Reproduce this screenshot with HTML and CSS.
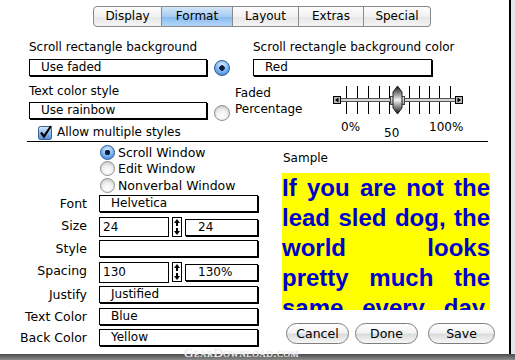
FILE: index.html
```html
<!DOCTYPE html>
<html lang="en">
  <head>
    <meta charset="UTF-8" />
    <meta name="viewport" content="width=device-width, initial-scale=1.0" />
    <title>Format</title>
    <link rel="stylesheet" href="styles.css">
  </head>
  <body>
    <div class="window">
      <div class="tabs">
        <span class="tab">Display</span>
        <span class="tab selected">Format</span>
        <span class="tab">Layout</span>
        <span class="tab">Extras</span>
        <span class="tab">Special</span>
      </div>

      <div class="top">
        <div class="labels-row">
          <span class="label bg-label">Scroll rectangle background</span>
          <span class="label">Scroll rectangle background color</span>
        </div>
        <div class="fields-row">
          <div class="field main">Use faded</div>
          <span class="radio on"></span>
          <div class="field color">Red</div>
        </div>
        <div class="style-row">
          <div class="style-col">
            <span class="label">Text color style</span>
            <div class="field main">Use rainbow</div>
            <div class="check">
              <svg class="checkbox" width="15" height="15" viewBox="0 0 15 15">
                <defs>
                  <linearGradient id="cb" x1="0" y1="0" x2="0" y2="1">
                    <stop offset="0" stop-color="#d8e9fb" />
                    <stop offset="0.5" stop-color="#8dbdf0" />
                    <stop offset="1" stop-color="#4f8fdc" />
                  </linearGradient>
                </defs>
                <rect x="0.5" y="1.5" width="13" height="13" rx="2" fill="url(#cb)" stroke="#3d5f8c" />
                <path d="M3 7.5 L6 11.5 L13 1" fill="none" stroke="#000" stroke-width="2.2" />
              </svg>
              Allow multiple styles
            </div>
          </div>
          <span class="radio off fade-radio"></span>
          <span class="faded">Faded<br>Percentage</span>
          <div class="slider">
            <svg width="132" height="31" viewBox="0 0 132 31">
              <defs>
                <linearGradient id="knob" x1="0" y1="0" x2="0" y2="1">
                  <stop offset="0" stop-color="#111" />
                  <stop offset="0.5" stop-color="#f4f4f4" />
                  <stop offset="1" stop-color="#111" />
                </linearGradient>
                <linearGradient id="band" x1="0" y1="0" x2="0" y2="1">
                  <stop offset="0" stop-color="#eee" />
                  <stop offset="1" stop-color="#999" />
                </linearGradient>
              </defs>
              <g stroke="#000" stroke-width="1">
                <line x1="14.5" y1="2" x2="14.5" y2="30" />
                <line x1="25.5" y1="2" x2="25.5" y2="30" />
                <line x1="36.5" y1="2" x2="36.5" y2="30" />
                <line x1="47.5" y1="2" x2="47.5" y2="30" />
                <line x1="57.5" y1="2" x2="57.5" y2="30" />
                <line x1="77.5" y1="2" x2="77.5" y2="30" />
                <line x1="87.5" y1="2" x2="87.5" y2="30" />
                <line x1="97.5" y1="2" x2="97.5" y2="30" />
                <line x1="107.5" y1="2" x2="107.5" y2="30" />
                <line x1="118.5" y1="2" x2="118.5" y2="30" />
              </g>
              <rect x="8.5" y="14.5" width="116" height="3" fill="#d4d4d4" stroke="#555" />
              <rect x="1.5" y="12.5" width="7" height="7" fill="#bbb" stroke="#000" />
              <path d="M3 16 L6.5 13.5 L6.5 18.5 Z" fill="#000" />
              <rect x="123.5" y="12.5" width="7" height="7" fill="#bbb" stroke="#000" />
              <path d="M129 16 L125.5 13.5 L125.5 18.5 Z" fill="#000" />
              <rect x="58.5" y="12.5" width="14" height="8" fill="url(#band)" stroke="#444" />
              <path d="M65.5 2 L70 8 L70 24 L65.5 30 L61 24 L61 8 Z" fill="url(#knob)" stroke="#222" />
            </svg>
            <div class="ticks">
              <span class="tick-low">0%</span>
              <span class="tick-mid">50</span>
              <span class="tick-high">100%</span>
            </div>
          </div>
        </div>
      </div>

      <div class="divider"></div>

      <div class="bottom">
        <div class="left">
          <div class="modes">
            <div class="mode"><span class="radio on small"></span>Scroll Window</div>
            <div class="mode"><span class="radio off small"></span>Edit Window</div>
            <div class="mode"><span class="radio off small"></span>Nonverbal Window</div>
          </div>
          <div class="form">
            <span class="name">Font</span>
            <div class="row"><div class="field wide">Helvetica</div></div>

            <span class="name">Size</span>
            <div class="row">
              <div class="field num">24</div>
              <svg class="stepper" width="10" height="20" viewBox="0 0 10 20">
                <rect x="0.5" y="0.5" width="9" height="19" fill="#fff" stroke="#000" />
                <path d="M5 2 L8 6 L6 6 L6 9 L4 9 L4 6 L2 6 Z" fill="#000" />
                <path d="M5 18 L8 14 L6 14 L6 11 L4 11 L4 14 L2 14 Z" fill="#000" />
              </svg>
              <div class="field small">24</div>
            </div>

            <span class="name">Style</span>
            <div class="row"><div class="field wide"></div></div>

            <span class="name">Spacing</span>
            <div class="row">
              <div class="field num tall">130</div>
              <svg class="stepper" width="10" height="20" viewBox="0 0 10 20">
                <rect x="0.5" y="0.5" width="9" height="19" fill="#fff" stroke="#000" />
                <path d="M5 2 L8 6 L6 6 L6 9 L4 9 L4 6 L2 6 Z" fill="#000" />
                <path d="M5 18 L8 14 L6 14 L6 11 L4 11 L4 14 L2 14 Z" fill="#000" />
              </svg>
              <div class="field small">130%</div>
            </div>

            <span class="name">Justify</span>
            <div class="row"><div class="field wide">Justified</div></div>

            <span class="name">Text Color</span>
            <div class="row"><div class="field wide">Blue</div></div>

            <span class="name">Back Color</span>
            <div class="row"><div class="field wide">Yellow</div></div>
          </div>
        </div>

        <div class="right">
          <span class="sample-label">Sample</span>
          <div class="sample">
            <div class="line">If you are not the</div>
            <div class="line">lead sled dog, the</div>
            <div class="line">world looks</div>
            <div class="line">pretty much the</div>
            <div class="line">same every day.</div>
          </div>
          <div class="buttons">
            <button class="btn cancel">Cancel</button>
            <button class="btn done">Done</button>
            <button class="btn save">Save</button>
          </div>
        </div>
      </div>

      <span class="watermark">GearDownload.com</span>
    </div>
  </body>
</html>
```

FILE: styles.css
```css
/* page and window frame */
body {
  margin: 0;
  height: 360px;
  background: linear-gradient(#e6e6e6 354px, #4a4a4a 354px, #8c8c8c 360px);
  font-family: "DejaVu Sans", "Liberation Sans", sans-serif;
  font-size: 12px;
  color: #000;
}

.window {
  position: relative;
  width: 511px;
  height: 354px;
  box-sizing: border-box;
  background: #fff;
  border-right: 2px solid #000;
}

/* segmented tabs */
.tabs {
  display: flex;
  margin-left: 93px;
  padding-top: 6px;
}

.tab {
  height: 19px;
  line-height: 19px;
  text-align: center;
  border: 1px solid #8a8a8a;
  border-left: none;
  background: linear-gradient(#fdfdfd, #f1f1f1 50%, #e6e6e6 51%, #f4f4f4);
}

.tab:nth-child(1) { width: 67px; border-left: 1px solid #8a8a8a; border-radius: 4px 0 0 4px; }
.tab:nth-child(2) { width: 70px; }
.tab:nth-child(3) { width: 65px; }
.tab:nth-child(4) { width: 64px; }
.tab:nth-child(5) { width: 66px; border-radius: 0 4px 4px 0; }

.tab.selected {
  background: linear-gradient(#d3e6fa, #a7cbf1 50%, #86b8ee 51%, #b3d6f9);
}

/* top part */
.top {
  padding-left: 29px;
}

.label {
  display: block;
  line-height: 16px;
}

.labels-row {
  display: flex;
  margin-top: 12px;
}

.labels-row .bg-label {
  width: 224px;
}

.fields-row {
  display: flex;
  align-items: flex-start;
  margin-top: 4px;
}

.field {
  box-sizing: border-box;
  height: 17px;
  line-height: 15px;
  padding-left: 11px;
  border: 1px solid #000;
  box-shadow: 1px 1px 0 #000;
  background: #fff;
  white-space: nowrap;
}

.field.main { width: 178px; }
.field.color { width: 179px; margin-left: 23px; }

.radio {
  display: inline-block;
  box-sizing: border-box;
  width: 16px;
  height: 16px;
  border-radius: 50%;
  flex: none;
}

.radio.on {
  border: 1px solid #2d5b96;
  background: radial-gradient(circle at 50% 50%, #0d1f3a 0 2.5px, transparent 3px),
    radial-gradient(circle at 50% 30%, #e0efff 0, #86bdf5 45%, #2f79d6 100%);
}

.radio.off {
  border: 1px solid #8e8e8e;
  background: radial-gradient(circle at 50% 70%, #ffffff 0, #f0f0f0 45%, #bdbdbd 100%);
}

.fields-row .radio { margin-left: 7px; margin-top: 1px; }

.style-row {
  display: flex;
  align-items: flex-start;
  margin-top: 7px;
}

.style-col .field { margin-top: 3px; }

.check {
  display: flex;
  align-items: center;
  gap: 4px;
  margin-top: 5px;
  margin-left: 9px;
  line-height: 16px;
}

.fade-radio { margin-left: 7px; margin-top: 22px; }

.faded {
  width: 97px;
  margin-left: 5px;
  margin-top: 2px;
  line-height: 16px;
}

.slider svg { display: block; margin-top: 1px; }

.ticks {
  position: relative;
  height: 24px;
}

.ticks span { position: absolute; }
.tick-low { left: 9px; top: 5px; }
.tick-mid { left: 52px; top: 11px; }
.tick-high { left: 97px; top: 5px; }

.divider {
  height: 1px;
  width: 461px;
  margin-left: 27px;
  margin-top: 1px;
  background: #000;
}

/* bottom part */
.bottom {
  display: flex;
}

.left { width: 282px; }

.modes {
  padding-left: 100px;
  padding-top: 2px;
}

.mode {
  display: flex;
  align-items: center;
  gap: 3px;
  height: 16.5px;
  font-size: 12.5px;
}

.radio.small { width: 15px; height: 15px; }

.form {
  display: grid;
  grid-template-columns: 87px 1fr;
  grid-template-rows: 22px 23px 22px 24px 22px 21px 21px;
  column-gap: 12px;
  margin-top: 1px;
}

.name {
  text-align: right;
  line-height: 17px;
  font-size: 12.5px;
}

.row {
  display: flex;
  align-items: flex-start;
}

.field.wide { width: 159px; }

.field.num {
  width: 70px;
  height: 20px;
  line-height: 18px;
  padding-left: 3px;
  box-shadow: none;
}

.field.num.tall { height: 21px; line-height: 19px; }

.stepper { margin-left: 3px; flex: none; }

.field.small {
  width: 73px;
  margin-left: 3px;
  margin-top: 2px;
  padding-left: 12px;
}

.right {
  display: flex;
  flex-direction: column;
}

.sample-label {
  margin-top: 8px;
  padding-left: 1px;
  line-height: 16px;
}

.sample {
  width: 208px;
  height: 137px;
  margin-top: 7px;
  overflow: hidden;
  background: #ffff00;
  color: #0000cc;
  font-family: "Liberation Sans", Arial, sans-serif;
  font-weight: bold;
  font-size: 24px;
  line-height: 30px;
}

.sample .line {
  text-align: justify;
  text-align-last: justify;
  white-space: nowrap;
}

.buttons {
  display: flex;
  margin-top: 13px;
  margin-left: 4px;
}

.btn {
  height: 21px;
  padding: 0;
  border: 1px solid #7d7d7d;
  border-radius: 11px;
  background: linear-gradient(#ffffff, #f3f3f3 45%, #dcdcdc 55%, #f7f7f7);
  font-family: "DejaVu Sans", "Liberation Sans", sans-serif;
  font-size: 12.5px;
  color: #000;
}

.btn.cancel { width: 63px; }
.btn.done { width: 63px; margin-left: 6px; }
.btn.save { width: 67px; margin-left: 10px; }

.watermark {
  position: absolute;
  left: 184px;
  top: 345px;
  font-family: "Liberation Serif", serif;
  font-variant: small-caps;
  font-size: 13px;
  color: #f2f2f2;
  text-shadow: 0 0 1px #d0d0d0;
  letter-spacing: 0.5px;
}
```
